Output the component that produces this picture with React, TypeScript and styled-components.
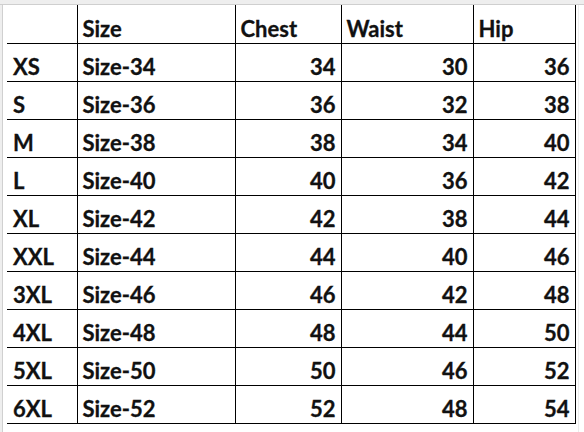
import React from "react";
import styled, { createGlobalStyle } from "styled-components";

const GlobalStyle = createGlobalStyle`
  html, body {
    margin: 0;
    padding: 0;
    background: #ffffff;
  }
  body {
    width: 584px;
    height: 432px;
    overflow: hidden;
    font-family: Lato, "Liberation Sans", sans-serif;
  }
`;

const rows = [
  ["XS", "Size-34", 34, 30, 36],
  ["S", "Size-36", 36, 32, 38],
  ["M", "Size-38", 38, 34, 40],
  ["L", "Size-40", 40, 36, 42],
  ["XL", "Size-42", 42, 38, 44],
  ["XXL", "Size-44", 44, 40, 46],
  ["3XL", "Size-46", 46, 42, 48],
  ["4XL", "Size-48", 48, 44, 50],
  ["5XL", "Size-50", 50, 46, 52],
  ["6XL", "Size-52", 52, 48, 54],
];

const columnWidths = [70, 158, 106, 132, 102];

const Sheet = styled.div`
  width: 584px;
  height: 432px;
  display: flex;
  flex-direction: column;
  background: #ffffff;
`;

// the strip of the spreadsheet column header cut off at the top
const TopStrip = styled.div`
  height: 4px;
  background: #eeeeee;
  border-bottom: 1px solid #cfcfcf;
  flex-shrink: 0;
`;

const Body = styled.div`
  display: flex;
  flex: 1;
`;

const RowGutter = styled.div`
  width: 2px;
  background: #eeeeee;
  border-right: 1px solid #d0d0d0;
  margin-right: 4px;
`;

const RightGutter = styled.div`
  flex: 1;
  border-left: 1px solid #ececec;
  margin-left: 2px;
`;

const Table = styled.table`
  border-collapse: collapse;
  table-layout: fixed;
  align-self: flex-start;
`;

const Row = styled.tr`
  height: 38px;
`;

const Cell = styled.td<{ $align?: "left" | "right"; $first?: boolean; $header?: boolean }>`
  box-sizing: border-box;
  height: 38px;
  padding: ${(p) => (p.$header ? "11px" : "10px")} 5px 0 ${(p) => (p.$first ? "6px" : "5px")};
  vertical-align: top;
  text-align: ${(p) => p.$align || "left"};
  font-family: Lato, "Liberation Sans", sans-serif;
  font-weight: 700;
  font-size: 22px;
  line-height: 1.2;
  color: #111111;
  white-space: nowrap;
  -webkit-text-stroke: 0.3px #111111;
  border: 1px solid #000000;
  border-left: ${(p) => (p.$first ? "none" : "1px solid #000000")};
  border-top: ${(p) => (p.$header ? "none" : "1px solid #000000")};
`;

function App() {
  return (
    <>
      <GlobalStyle />
      <Sheet>
        <TopStrip />
        <Body>
          <RowGutter />
          <Table>
            <colgroup>
              {columnWidths.map((w, i) => (
                <col key={i} style={{ width: w }} />
              ))}
            </colgroup>
            <tbody>
              <Row>
                <Cell $first $header></Cell>
                <Cell $header>Size</Cell>
                <Cell $header>Chest</Cell>
                <Cell $header>Waist</Cell>
                <Cell $header>Hip</Cell>
              </Row>
              {rows.map((r) => (
                <Row key={r[0] as string}>
                  <Cell $first>{r[0]}</Cell>
                  <Cell>{r[1]}</Cell>
                  <Cell $align="right">{r[2]}</Cell>
                  <Cell $align="right">{r[3]}</Cell>
                  <Cell $align="right">{r[4]}</Cell>
                </Row>
              ))}
            </tbody>
          </Table>
          <RightGutter />
        </Body>
      </Sheet>
    </>
  );
}

export default App;
